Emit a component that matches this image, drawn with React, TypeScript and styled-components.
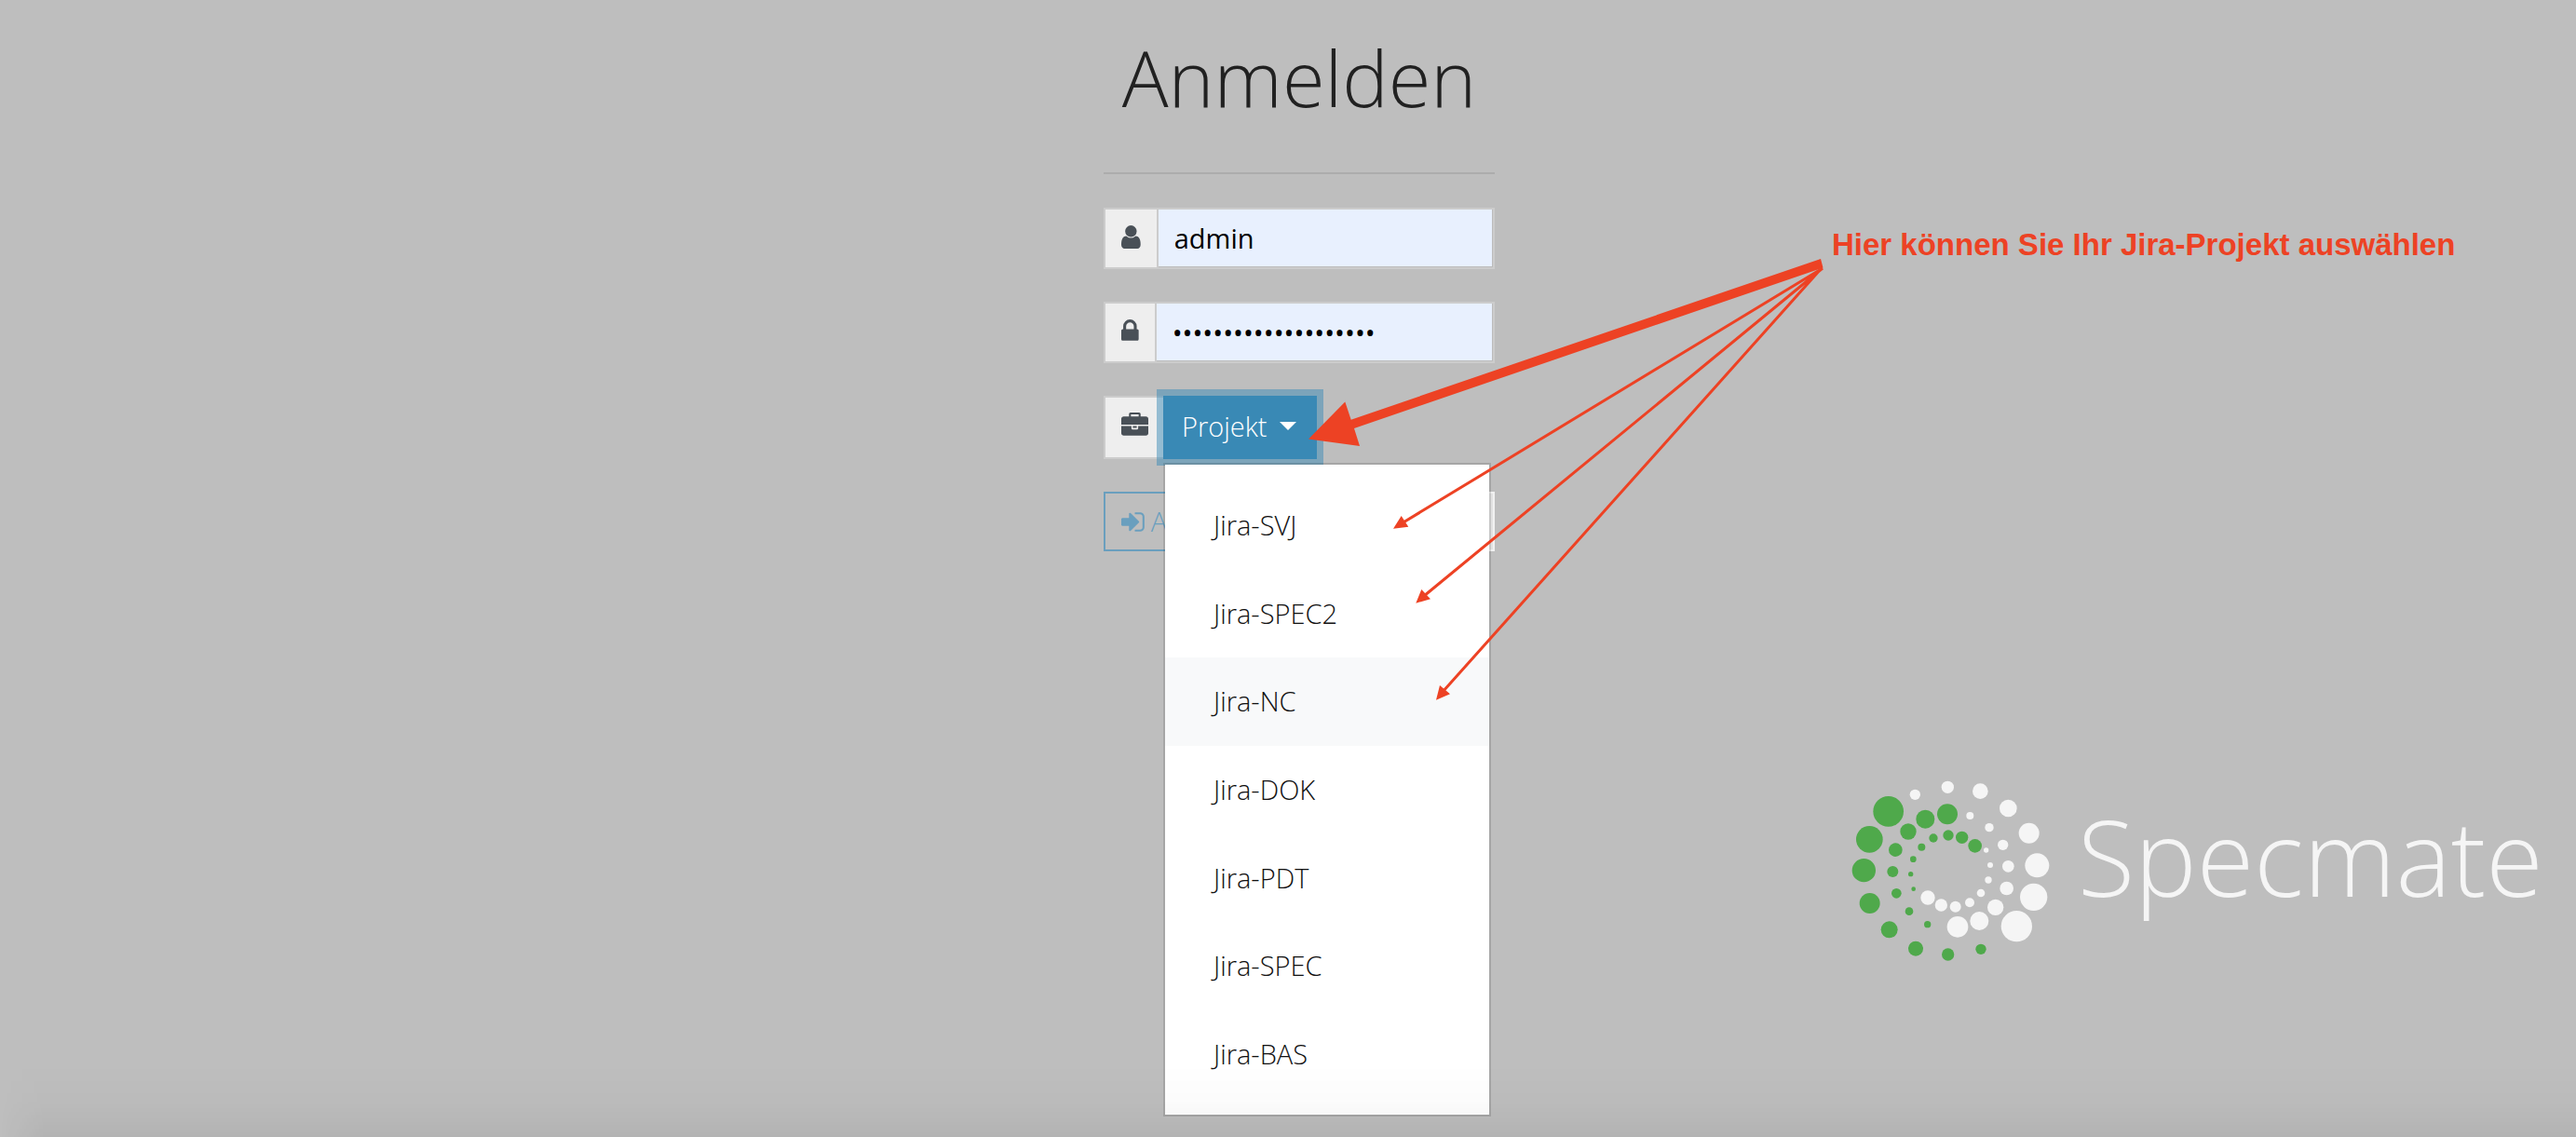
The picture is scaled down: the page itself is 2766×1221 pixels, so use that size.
import React from "react";
import styled, { createGlobalStyle } from "styled-components";

const GlobalStyle = createGlobalStyle`
  *, *::before, *::after { box-sizing: border-box; }
  body {
    margin: 0;
    background: #bebebe;
    color: #212121;
    font-family: "Open Sans", "Noto Sans", sans-serif;
    font-size: 29px;
    font-weight: 300;
    line-height: 44px;
  }
  button, input { font: inherit; margin: 0; border-radius: 0; }
`;

const Page = styled.main`
  position: relative;
  min-height: 100vh;
  padding-left: 24px;
  display: grid;
  grid-template-columns: minmax(0, 1fr) 420px minmax(0, 1fr);
  overflow: hidden;
`;

const LoginForm = styled.form`
  grid-column: 2;
  position: relative;
  padding-top: 33px;
`;

const Title = styled.h1`
  margin: 0;
  font-size: 83px;
  font-weight: 300;
  line-height: 100px;
  text-align: center;
`;

const Divider = styled.hr`
  margin: 52px 0 36px;
  border: 0;
  border-top: 2px solid #acacac;
`;

const Fields = styled.div`
  display: flex;
  flex-direction: column;
  gap: 35px;
`;

const Group = styled.div`
  position: relative;
  display: flex;
  align-items: stretch;
`;

const Addon = styled.label`
  display: flex;
  align-items: center;
  padding: 0 17px 3px;
  border: 2px solid #cccccc;
  border-right-width: 0;
  background: #eeeeee;
  color: #495057;
`;

const TextInput = styled.input`
  flex: 1;
  min-width: 0;
  height: 66px;
  padding: 0 17px 2px;
  border: 2px solid #cccccc;
  background: #e8f0fe;
  box-shadow: inset -1px -1px 0 #bcbcbc;
  color: #000000;
  font-weight: 400;
  outline: none;
`;

const Toggle = styled.button`
  position: relative;
  display: flex;
  align-items: center;
  gap: 14px;
  height: 68px;
  margin-left: -1px;
  padding: 0 22px 3px 20px;
  border: 0;
  background: #3989b5;
  box-shadow: 0 0 0 7px rgba(57, 137, 181, 0.5);
  color: #ffffff;
`;

const Caret = styled.span`
  border: 9px solid transparent;
  border-top-color: #ffffff;
  border-bottom: 0;
`;

const Menu = styled.ul`
  position: absolute;
  z-index: 1;
  top: 72px;
  left: 64px;
  width: 352px;
  min-height: 702px;
  margin: 0;
  padding: 18px 0;
  display: grid;
  grid-auto-rows: 1fr;
  list-style: none;
  border: 2px solid rgba(0, 0, 0, 0.12);
  background: #ffffff;
  background-clip: padding-box;
`;

const MenuItem = styled.li`
  display: flex;
`;

const MenuButton = styled.button<{ $active?: boolean }>`
  flex: 1;
  padding: 0 52px;
  border: 0;
  background: ${({ $active }) => ($active ? "#f8f9fa" : "transparent")};
  color: #111111;
  text-align: left;
`;

const Actions = styled.div`
  display: flex;
`;

const ActionButton = styled.button<{ $light?: boolean }>`
  flex: 1;
  display: flex;
  align-items: center;
  gap: 7px;
  height: 64px;
  padding: 0 17px;
  border: 2px solid ${({ $light }) => ($light ? "#f0f0f0" : "#6a9fbe")};
  background: ${({ $light }) => ($light ? "#e2e2e2" : "transparent")};
  color: #6a9fbe;
`;

const Glyph = styled.svg`
  display: block;
  height: 29px;
  fill: currentColor;
`;

const Arrows = styled.svg`
  position: absolute;
  z-index: 2;
  top: 275px;
  left: 220px;
  width: 555px;
  height: 480px;
  pointer-events: none;
  fill: #ed4224;
  stroke: #ed4224;
`;

const Side = styled.aside`
  grid-column: 3;
  padding: 244px 0 0 362px;
  white-space: nowrap;
`;

const Hint = styled.p`
  margin: 0;
  color: #ed4224;
  font-family: "Liberation Sans", Arial, sans-serif;
  font-size: 33px;
  font-weight: 700;
  line-height: 38px;
`;

const Brand = styled.div`
  display: flex;
  align-items: flex-start;
  gap: 30px;
  margin: 556px 0 0 21px;
`;

const BrandMark = styled.svg`
  flex: none;
  width: 213px;
  height: 195px;
`;

const BrandName = styled.span`
  padding-top: 17px;
  color: #f5f5f5;
  font-size: 112px;
  line-height: 130px;
`;

const BottomShade = styled.div`
  position: fixed;
  z-index: 3;
  inset: auto 0 0 0;
  height: 80px;
  pointer-events: none;
  background: linear-gradient(rgba(0, 0, 0, 0), rgba(0, 0, 0, 0.012) 50%, rgba(0, 0, 0, 0.055));
  mask-image: linear-gradient(to right, transparent, #000 48px);
`;

const UserIcon = () => (
  <Glyph viewBox="256 0 1280 1792" aria-hidden="true">
    <path d="M1536 1399q0 109-62.5 187t-150.5 78h-854q-88 0-150.5-78t-62.5-187q0-85 8.5-160.5t31.5-152 58.5-131 94-89 134.5-34.5q131 128 313 128t313-128q76 0 134.5 34.5t94 89 58.5 131 31.5 152 8.5 160.5zm-256-887q0 159-112.5 271.5t-271.5 112.5-271.5-112.5-112.5-271.5 112.5-271.5 271.5-112.5 271.5 112.5 112.5 271.5z" />
  </Glyph>
);

const LockIcon = () => (
  <Glyph viewBox="320 0 1152 1792" aria-hidden="true">
    <path d="M640 768h512v-192q0-106-75-181t-181-75-181 75-75 181v192zm832 96v576q0 40-28 68t-68 28h-960q-40 0-68-28t-28-68v-576q0-40 28-68t68-28h32v-192q0-184 132-316t316-132 316 132 132 316v192h32q40 0 68 28t28 68z" />
  </Glyph>
);

const BriefcaseIcon = () => (
  <Glyph viewBox="0 -128 1792 1792" aria-hidden="true">
    <path d="M640 128h512v-128h-512v128zM1792 768v480q0 66-47 113t-113 47h-1472q-66 0-113-47t-47-113v-480h672v160q0 26 19 45t45 19h320q26 0 45-19t19-45v-160h672zM1024 768v128h-256v-128h256zM1792 288v384h-1792v-384q0-66 47-113t113-47h352v-160q0-40 28-68t68-28h576q40 0 68 28t28 68v160h352q66 0 113 47t47 113z" />
  </Glyph>
);

const SignInIcon = () => (
  <Glyph viewBox="128 0 1536 1792" aria-hidden="true">
    <path d="M1312 896q0 26-19 45l-544 544q-19 19-45 19t-45-19-19-45v-288h-448q-26 0-45-19t-19-45v-384q0-26 19-45t45-19h448v-288q0-26 19-45t45-19 45 19l544 544q19 19 19 45zm352-352v704q0 119-84.5 203.5t-203.5 84.5h-320q-13 0-22.5-9.5t-9.5-22.5q0-4-1-20t-.5-26.5 3-23.5 10-19.5 20.5-6.5h320q66 0 113-47t47-113v-704q0-66-47-113t-113-47h-312l-11.5-1-11.5-3-8-5.5-7-9-2-13.5q0-4-1-20t-.5-26.5 3-23.5 10-19.5 20.5-6.5h320q119 0 203.5 84.5t84.5 203.5z" />
  </Glyph>
);

type Dot = [number, number, number];

const greenDots: Dot[] = [
  [203, 154, 49], [142, 244, 43], [124, 344, 38], [143, 450, 33], [206, 535, 27],
  [291, 596, 24], [395, 615, 20], [501, 598, 17], [393, 163, 33], [322, 179, 30],
  [267, 219, 26], [226, 278, 22], [217, 348, 18], [229, 418, 16], [270, 476, 13],
  [329, 518, 11], [482, 265, 22], [440, 238, 20], [396, 231, 17], [348, 240, 14],
  [310, 269, 12], [283, 308, 10], [275, 356, 8], [284, 404, 7],
];

const whiteDots: Dot[] = [
  [289, 100, 17], [394, 76, 20], [499, 89, 25], [589, 144, 28], [656, 224, 33],
  [682, 328, 39], [671, 430, 44], [616, 524, 50], [466, 168, 12], [528, 206, 14],
  [572, 262, 17], [589, 331, 19], [584, 402, 22], [548, 463, 26], [496, 507, 30],
  [426, 526, 34], [518, 279, 8], [531, 327, 9], [525, 375, 11], [501, 417, 13],
  [465, 448, 15], [419, 461, 18], [373, 456, 20], [330, 432, 23],
];

const projects = ["Jira-SVJ", "Jira-SPEC2", "Jira-NC", "Jira-DOK", "Jira-PDT", "Jira-SPEC", "Jira-BAS"];

export default function App() {
  return (
    <>
      <GlobalStyle />
      <Page>
        <LoginForm onSubmit={(event) => event.preventDefault()}>
          <Title>Anmelden</Title>
          <Divider />
          <Fields>
            <Group>
              <Addon htmlFor="username" aria-label="Benutzername">
                <UserIcon />
              </Addon>
              <TextInput id="username" type="text" defaultValue="admin" />
            </Group>
            <Group>
              <Addon htmlFor="password" aria-label="Passwort">
                <LockIcon />
              </Addon>
              <TextInput id="password" type="password" defaultValue="abcdefghijklmnopqrst" />
            </Group>
            <Group>
              <Addon htmlFor="project" aria-label="Projekt">
                <BriefcaseIcon />
              </Addon>
              <Toggle id="project" type="button" aria-haspopup="true" aria-expanded="true">
                Projekt
                <Caret />
              </Toggle>
              <Menu>
                {projects.map((project) => (
                  <MenuItem key={project}>
                    <MenuButton type="button" $active={project === "Jira-NC"}>
                      {project}
                    </MenuButton>
                  </MenuItem>
                ))}
              </Menu>
            </Group>
            <Actions>
              <ActionButton type="submit">
                <SignInIcon />
                Anmelden
              </ActionButton>
              <ActionButton type="button" $light aria-label="Abbrechen" />
            </Actions>
          </Fields>
          <Arrows viewBox="1405 275 555 480" aria-hidden="true">
            <path stroke="none" d="M1405 471.5L1444.3 431.5L1450.7 450.7L1955 278L1957.5 287.5L1454 460L1460 479Z" />
            <path fill="none" strokeWidth="3" d="M1957 288L1506 561.5M1957 288L1529 640M1955 289L1549 743" />
            <path stroke="none" d="M1496 567.7L1504.7 554L1512.3 565.7ZM1520.3 647.7L1526.3 633L1536 643.3ZM1542 751.8L1546 736L1557 745.3Z" />
          </Arrows>
        </LoginForm>
        <Side>
          <Hint>Hier können Sie Ihr Jira-Projekt auswählen</Hint>
          <Brand>
            <BrandMark viewBox="84 54 639 585" aria-hidden="true">
              {greenDots.map(([x, y, r]) => (
                <circle key={`${x}-${y}`} cx={x} cy={y} r={r} fill="#4fa94b" />
              ))}
              {whiteDots.map(([x, y, r]) => (
                <circle key={`${x}-${y}`} cx={x} cy={y} r={r} fill="#f5f5f5" />
              ))}
            </BrandMark>
            <BrandName>Specmate</BrandName>
          </Brand>
        </Side>
        <BottomShade />
      </Page>
    </>
  );
}
